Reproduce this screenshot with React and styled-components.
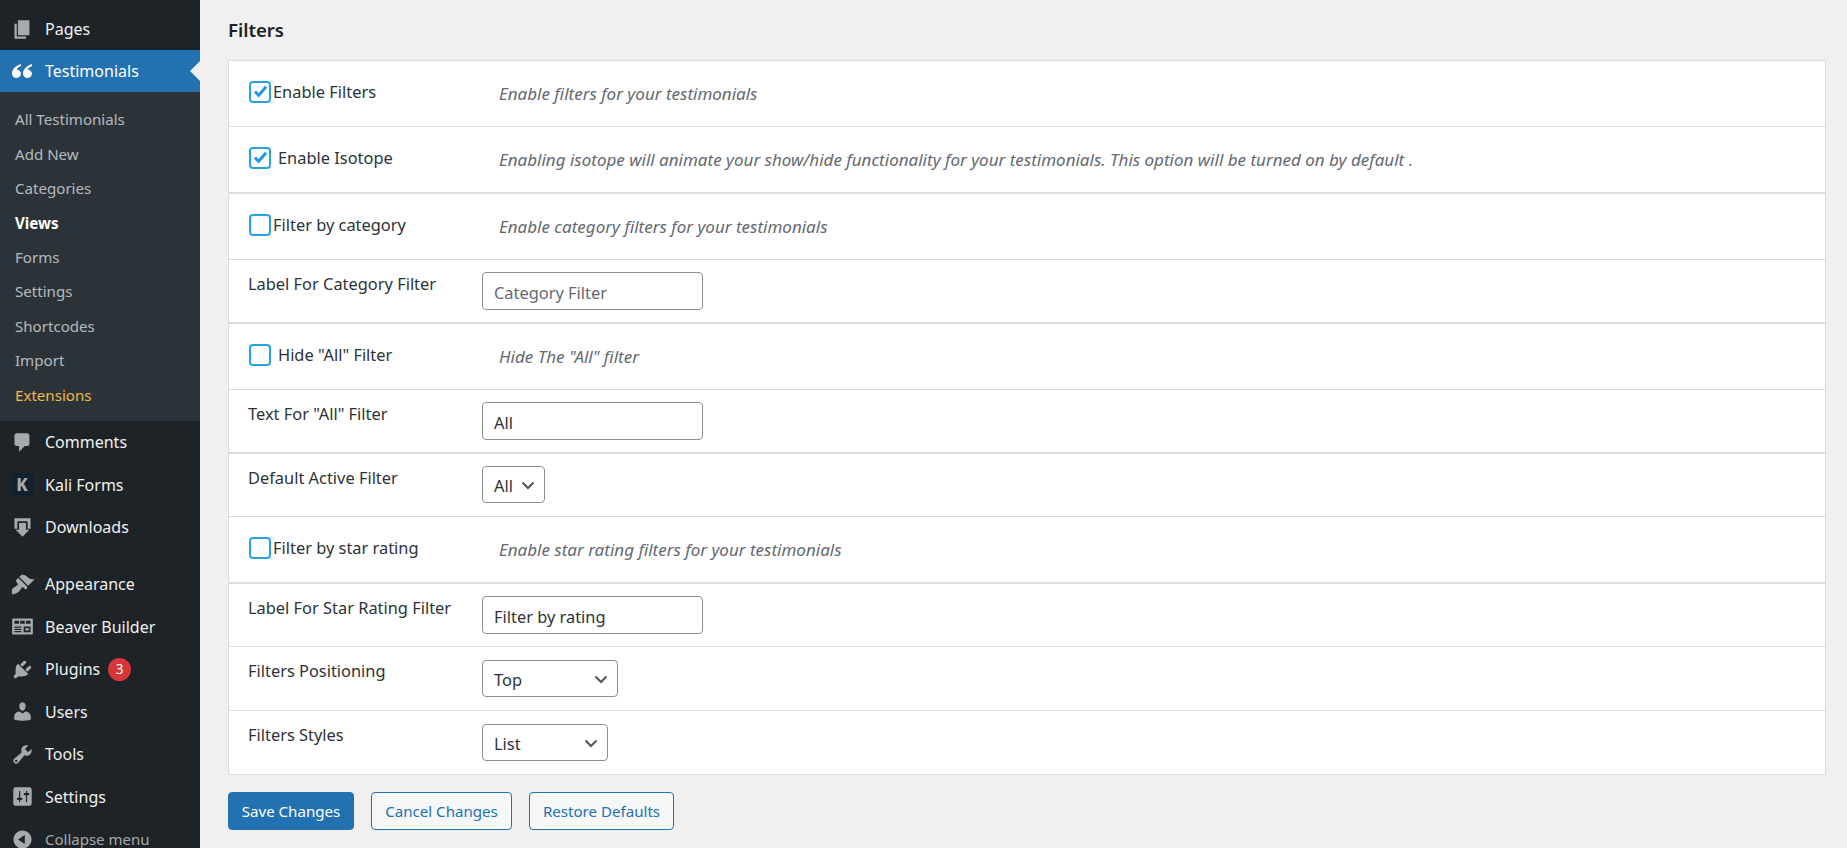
import React from 'react'
import styled, { createGlobalStyle } from 'styled-components'

const Global = createGlobalStyle`
  html, body { margin: 0; padding: 0; height: 100%; overflow: hidden; background: #f0f0f1; }
  body { font-family: "Noto Sans", "Open Sans", sans-serif; color: #2c3338; }
  * { box-sizing: border-box; }
`

const Shell = styled.div`
  display: flex;
  height: 848px;
  overflow: hidden;
`
const Sidebar = styled.nav`
  width: 200px;
  flex-shrink: 0;
  background: #1d2327;
  overflow: hidden;
`
const MenuItem = styled.div`
  height: ${p => p.$h || 42.5}px;
  padding-top: ${p => p.$pt || 0}px;
  display: flex;
  align-items: center;
  font-size: ${p => p.$muted ? 15 : 16}px;
  margin-top: ${p => p.$mt || 0}px;
  position: relative;
  background: ${p => p.$current ? '#2271b1' : 'transparent'};
  color: ${p => p.$current ? '#fff' : p.$muted ? '#a7aaad' : '#f0f0f1'};
`
const IconSlot = styled.span`
  width: 45px;
  flex-shrink: 0;
  display: flex;
  justify-content: center;
  padding-right: 1px;
  svg { display: block; }
`
const CurrentArrow = styled.span`
  position: absolute;
  right: 0;
  top: 50%;
  margin-top: -10px;
  border: 10px solid transparent;
  border-right-color: #f0f0f1;
  border-left-width: 0;
`
const Submenu = styled.div`
  background: #2c3338;
  padding: 10px 0 9px;
`
const SubItem = styled.div`
  height: 34.45px;
  padding-left: 15px;
  display: flex;
  align-items: center;
  font-size: 15.1px;
  font-weight: ${p => p.$active ? 700 : 400};
  color: ${p => p.$active ? '#fff' : p.$accent ? '#f0b849' : 'rgba(240,246,252,.7)'};
`
const Count = styled.span`
  width: 23px;
  height: 23px;
  border-radius: 50%;
  background: #d63638;
  color: #fff;
  font-size: 13.5px;
  margin-left: 8px;
  display: inline-flex;
  align-items: center;
  justify-content: center;
`
const KaliMark = styled.span`
  width: 23px;
  height: 23px;
  background: #13202f;
  color: #a7aaad;
  font-size: 17px;
  font-weight: 800;
  display: flex;
  align-items: center;
  justify-content: center;
`

const Main = styled.main`
  flex: 1;
  padding: 0 21px 0 28px;
  min-width: 0;
`
const Heading = styled.h2`
  margin: 0;
  height: 60px;
  padding-bottom: 2px;
  display: flex;
  align-items: center;
  font-size: 18.5px;
  font-weight: 600;
  color: #1d2327;
`
const Panel = styled.div`
  background: #fff;
  border: 1px solid #dcdcde;
`
const Row = styled.div`
  height: ${p => p.$h}px;
  display: flex;
  align-items: flex-start;
  border-bottom: ${p => p.$heavy ? 2 : 1}px solid #dcdcde;
  padding-left: 19px;

  &:last-child { border-bottom: 0; }
`
const LabelCell = styled.div`
  width: 234px;
  flex-shrink: 0;
  display: flex;
  align-items: center;
  font-size: 16.4px;
  color: #2c3338;
  padding-top: ${p => p.$pt || 0}px;
`
const Box = styled.span`
  width: 22px;
  height: 22px;
  margin-left: 1px;
  margin-right: ${p => p.$spaced ? 7 : 2}px;
  border: 2.5px solid #27a2e2;
  border-radius: 4px;
  background: #fff;
  display: flex;
  align-items: center;
  justify-content: center;
  flex-shrink: 0;
`
const Hint = styled.div`
  margin-left: 17px;
  font-size: 17px;
  font-style: italic;
  color: #646970;
  padding-top: 20.5px;
`
const TextField = styled.input`
  width: 221px;
  height: 38px;
  margin-top: 12px;
  padding: 2px 11px 0;
  border: 1px solid #8c8f94;
  border-radius: 4px;
  font: 400 16.4px "Noto Sans", sans-serif;
  color: #2c3338;
  background: #fff;
  &::placeholder { color: #646970; opacity: 1; }
`
const SelectBox = styled.div`
  width: ${p => p.$w}px;
  height: 37px;
  margin-top: ${p => p.$mt || 12}px;
  padding: 2px 9px 0 11px;
  border: 1px solid #8c8f94;
  border-radius: 4px;
  font-size: 16.4px;
  color: #2c3338;
  display: flex;
  align-items: center;
  justify-content: space-between;
  background: #fff;
`
const Actions = styled.div`
  display: flex;
  gap: 17px;
  margin-top: 17px;
`
const Button = styled.button`
  height: 38px;
  width: ${p => p.$w}px;
  border-radius: 4px;
  font: 400 15.1px "Noto Sans", sans-serif;
  border: 1px solid #2271b1;
  background: ${p => p.$primary ? '#2271b1' : '#f6f7f7'};
  color: ${p => p.$primary ? '#fff' : '#2271b1'};
  padding: 0;
`

const Dash = ({ d, size = 23 }) => (
  <svg width={size} height={size} viewBox="0 0 20 20" fill="#a7aaad" fillRule="evenodd"><path d={d} /></svg>
)
const Chevron = () => (
  <svg width="14" height="9" viewBox="0 0 14 9" fill="none" stroke="#50575e" strokeWidth="2"><path d="M1.5 1.5 7 7l5.5-5.5" /></svg>
)
const Tick = () => (
  <svg width="15" height="13" viewBox="0 0 16 14" fill="none" stroke="#1e9be0" strokeWidth="3.2"><path d="M2 7l4 4 8-9" /></svg>
)

const icons = {
  pages: 'M6 15V2h10v13H6zm-1 1h8v2H3V5h2v11z',
  comments: 'M5 2h9c1.1 0 2 .9 2 2v7c0 1.1-.9 2-2 2h-2l-5 5v-5H5c-1.1 0-2-.9-2-2V4c0-1.1.9-2 2-2z',
  downloads: 'M3 2h14v9h-2.500V4.500h-9V11H3V2zM7 6h6v6h3l-6 6-6-6h3V6z',
  appearance: 'M14.48 11.06L7.41 3.99l1.5-1.5c.5-.56 2.3-.47 3.51.32 1.21.8 1.43 1.28 2.91 2.1 1.18.64 2.45 1.26 4.45.85zm-.71.71L6.7 4.7 4.93 6.47c-.39.39-.39 1.02 0 1.41l1.06 1.06c.39.39.39 1.03 0 1.42-.6.6-1.43 1.11-2.21 1.69-.35.26-.7.53-1.01.84C1.43 13.23.99 15.49 2 18.01c.81-.27 1.79-.43 2.6-.77.81-.34 1.62-.72 2.37-1.47.31-.31.58-.66.84-1.01.58-.78 1.09-1.61 1.69-2.21.39-.39 1.03-.39 1.42 0l1.06 1.06c.39.39 1.02.39 1.41 0z',
  beaver: 'M2 3h16c.550 0 1 .450 1 1v12c0 .550-.450 1-1 1H2c-.550 0-1-.450-1-1V4c0-.550.450-1 1-1zm1 2v2.500h4V5H3zm5 0v2.500h4V5H8zm5 0v2.500h4V5h-4zM3 10v1h6v-1H3zm0 2v1h6v-1H3zm0 2v1h6v-1H3zm8-4v5h6v-5h-6zm1.500 1.500h3v2h-3v-2z',
  plugins: 'M13.11 4.36L9.87 7.6 8 5.73l3.24-3.24c.35-.34 1.05-.2 1.56.32.52.51.66 1.21.31 1.55zm-8 1.77l.91-1.12 9.01 9.01-1.19.84c-.71.71-2.63 1.16-3.82 1.16H6.14L4.9 17.26c-.59.59-1.54.59-2.12 0-.59-.58-.59-1.53 0-2.12l1.24-1.24v-3.88c0-1.13.4-3.19 1.09-3.89zm7.26 3.97l3.24-3.24c.34-.35 1.04-.21 1.55.31.52.51.66 1.21.31 1.55l-3.24 3.25z',
  users: 'M10 9.25c-2.27 0-2.73-3.44-2.73-3.44C7 4.02 7.82 2 9.97 2c2.16 0 2.98 2.02 2.71 3.81 0 0-.41 3.44-2.68 3.44zm0 2.57L12.72 10c2.39 0 4.52 2.33 4.52 4.53v2.49s-3.65 1.13-7.24 1.13c-3.65 0-7.24-1.13-7.24-1.13v-2.49c0-2.25 1.94-4.48 4.47-4.48z',
  tools: 'M16.68 9.77c-1.34 1.34-3.3 1.67-4.95.99l-5.41 6.52c-.99.99-2.59.99-3.58 0s-.99-2.59 0-3.57l6.52-5.42c-.68-1.65-.35-3.61.99-4.95 1.28-1.28 3.12-1.62 4.72-1.06l-2.89 2.89 2.82 2.82 2.86-2.87c.53 1.58.18 3.39-1.08 4.65zM3.81 16.21c.4.39 1.04.39 1.43 0 .4-.4.4-1.04 0-1.43-.39-.4-1.03-.4-1.43 0-.39.39-.39 1.03 0 1.43z',
  settings: 'M18 16V4c0-1.1-.9-2-2-2H4c-1.1 0-2 .9-2 2v12c0 1.1.9 2 2 2h12c1.1 0 2-.9 2-2zM8 11h1c.55 0 1 .45 1 1s-.45 1-1 1H8v1.5c0 .28-.22.5-.5.5s-.5-.22-.5-.5V13H6c-.55 0-1-.45-1-1s.45-1 1-1h1V5.5c0-.28.22-.5.5-.5s.5.22.5.5V11zm5-2h-1c-.55 0-1-.45-1-1s.45-1 1-1h1V5.5c0-.28.22-.5.5-.5s.5.22.5.5V7h1c.55 0 1 .45 1 1s-.45 1-1 1h-1v5.5c0 .28-.22.5-.5.5s-.5-.22-.5-.5V9z',
  collapse: 'M10 2.16c4.33 0 7.84 3.51 7.84 7.84s-3.51 7.84-7.84 7.84S2.16 14.33 2.16 10 5.71 2.16 10 2.16zm2 11.72V6.12L6.18 9.97z',
}

const subItems = ['All Testimonials', 'Add New', 'Categories', 'Views', 'Forms', 'Settings', 'Shortcodes', 'Import', 'Extensions']

export default function App() {
  return (
    <Shell>
      <Global />
      <Sidebar>
        <MenuItem $h={50} $pt={8}><IconSlot><Dash d={icons.pages} /></IconSlot>Pages</MenuItem>
        <MenuItem $current $h={42}>
          <IconSlot>
            <svg width="20" height="14" viewBox="0 0 20 14" fill="#fff">
              <path d="M9 0C4 1.500 0 5 0 9.500 0 12 2 14 4.500 14S9 12 9 9.800 7 5.800 4.800 5.800C5.200 4 7 2.800 9 2zM20 0c-5 1.500-9 5-9 9.500 0 2.500 2 4.500 4.500 4.500S20 12 20 9.800s-2-4-4.200-4C16.200 4 18 2.800 20 2z" />
            </svg>
          </IconSlot>
          Testimonials
          <CurrentArrow />
        </MenuItem>
        <Submenu>
          {subItems.map(s => (
            <SubItem key={s} $active={s === 'Views'} $accent={s === 'Extensions'}>{s}</SubItem>
          ))}
        </Submenu>
        <MenuItem><IconSlot><Dash d={icons.comments} /></IconSlot>Comments</MenuItem>
        <MenuItem><IconSlot><KaliMark>K</KaliMark></IconSlot>Kali Forms</MenuItem>
        <MenuItem><IconSlot><Dash d={icons.downloads} /></IconSlot>Downloads</MenuItem>
        <MenuItem $mt={14.5}><IconSlot><Dash d={icons.appearance} size={25} /></IconSlot>Appearance</MenuItem>
        <MenuItem><IconSlot><Dash d={icons.beaver} /></IconSlot>Beaver Builder</MenuItem>
        <MenuItem><IconSlot><Dash d={icons.plugins} /></IconSlot>Plugins<Count>3</Count></MenuItem>
        <MenuItem><IconSlot><Dash d={icons.users} /></IconSlot>Users</MenuItem>
        <MenuItem><IconSlot><Dash d={icons.tools} /></IconSlot>Tools</MenuItem>
        <MenuItem><IconSlot><Dash d={icons.settings} /></IconSlot>Settings</MenuItem>
        <MenuItem $muted><IconSlot><Dash d={icons.collapse} /></IconSlot>Collapse menu</MenuItem>
      </Sidebar>
      <Main>
        <Heading>Filters</Heading>
        <Panel>
          <Row $h={66}>
            <LabelCell $pt={19}><Box><Tick /></Box>Enable Filters</LabelCell>
            <Hint>Enable filters for your testimonials</Hint>
          </Row>
          <Row $h={67} $heavy>
            <LabelCell $pt={19}><Box $spaced><Tick /></Box>Enable Isotope</LabelCell>
            <Hint>Enabling isotope will animate your show/hide functionality for your testimonials. This option will be turned on by default .</Hint>
          </Row>
          <Row $h={66}>
            <LabelCell $pt={19}><Box />Filter by category</LabelCell>
            <Hint>Enable category filters for your testimonials</Hint>
          </Row>
          <Row $h={64} $heavy>
            <LabelCell $pt={12}>Label For Category Filter</LabelCell>
            <TextField placeholder="Category Filter" />
          </Row>
          <Row $h={66}>
            <LabelCell $pt={19}><Box $spaced />Hide "All" Filter</LabelCell>
            <Hint>Hide The "All" filter</Hint>
          </Row>
          <Row $h={64} $heavy>
            <LabelCell $pt={12}>Text For "All" Filter</LabelCell>
            <TextField defaultValue="All" />
          </Row>
          <Row $h={63}>
            <LabelCell $pt={12}>Default Active Filter</LabelCell>
            <SelectBox $w={63}>All<Chevron /></SelectBox>
          </Row>
          <Row $h={67} $heavy>
            <LabelCell $pt={19}><Box />Filter by star rating</LabelCell>
            <Hint>Enable star rating filters for your testimonials</Hint>
          </Row>
          <Row $h={63}>
            <LabelCell $pt={12}>Label For Star Rating Filter</LabelCell>
            <TextField defaultValue="Filter by rating" />
          </Row>
          <Row $h={64}>
            <LabelCell $pt={12}>Filters Positioning</LabelCell>
            <SelectBox $w={136} $mt={13}>Top<Chevron /></SelectBox>
          </Row>
          <Row $h={63}>
            <LabelCell $pt={12}>Filters Styles</LabelCell>
            <SelectBox $w={126} $mt={13}>List<Chevron /></SelectBox>
          </Row>
        </Panel>
        <Actions>
          <Button $primary $w={126}>Save Changes</Button>
          <Button $w={141}>Cancel Changes</Button>
          <Button $w={145}>Restore Defaults</Button>
        </Actions>
      </Main>
    </Shell>
  )
}
